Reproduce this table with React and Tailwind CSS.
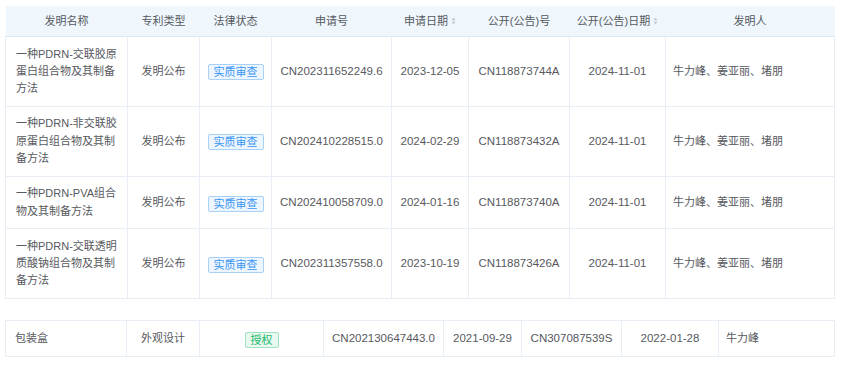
import React from "react";

const rows = [
  { name: "一种PDRN-交联胶原蛋白组合物及其制备方法", type: "发明公布", status: "实质审查", appNo: "CN202311652249.6", appDate: "2023-12-05", pubNo: "CN118873744A", pubDate: "2024-11-01", inventors: "牛力峰、姜亚丽、堵朋" },
  { name: "一种PDRN-非交联胶原蛋白组合物及其制备方法", type: "发明公布", status: "实质审查", appNo: "CN202410228515.0", appDate: "2024-02-29", pubNo: "CN118873432A", pubDate: "2024-11-01", inventors: "牛力峰、姜亚丽、堵朋" },
  { name: "一种PDRN-PVA组合物及其制备方法", type: "发明公布", status: "实质审查", appNo: "CN202410058709.0", appDate: "2024-01-16", pubNo: "CN118873740A", pubDate: "2024-11-01", inventors: "牛力峰、姜亚丽、堵朋" },
  { name: "一种PDRN-交联透明质酸钠组合物及其制备方法", type: "发明公布", status: "实质审查", appNo: "CN202311357558.0", appDate: "2023-10-19", pubNo: "CN118873426A", pubDate: "2024-11-01", inventors: "牛力峰、姜亚丽、堵朋" },
];

const FONT = { fontFamily: '"Liberation Sans", "Noto Sans CJK SC", sans-serif' };

function SortIcon() {
  return (
    <svg width="5" height="8" viewBox="0 0 5 8" className="inline-block">
      <path d="M0.5 3.2 L2.5 0.8 L4.5 3.2 Z" fill="#c0c4cc" />
      <path d="M0.5 4.8 L2.5 7.2 L4.5 4.8 Z" fill="#c0c4cc" />
    </svg>
  );
}

function Th({ children, sort }) {
  return (
    <th className="bg-[#eff6fc] border-b border-[#dbe7f2] py-[6px] px-[4px] text-[11px] leading-[18px] font-normal text-[#55595f] text-center whitespace-nowrap">
      <span className="inline-flex items-center gap-[3px]">
        {children}
        {sort ? <SortIcon /> : null}
      </span>
    </th>
  );
}

function BlueTag({ children }) {
  return (
    <span className="inline-block px-[5px] text-[11px] leading-[14px] border border-[#a8d1f8] bg-[#edf6ff] text-[#3a95f2] rounded-[2px]">
      {children}
    </span>
  );
}

function GreenTag({ children }) {
  return (
    <span className="inline-block px-[5px] text-[11px] leading-[14px] border border-[#9fe0c0] bg-[#e8f9f0] text-[#1db76a] rounded-[2px]">
      {children}
    </span>
  );
}

const td = "border border-[#e8eef5] py-[8.5px] leading-[17.3px] text-[#57595e] align-middle";

export default function App() {
  return (
    <div className="w-[846px] h-[366px] bg-white pt-[6px] pl-[5px]" style={FONT}>
      <table className="table-fixed border-collapse w-[829px]">
        <colgroup>
          <col className="w-[122px]" />
          <col className="w-[72px]" />
          <col className="w-[72px]" />
          <col className="w-[120px]" />
          <col className="w-[77px]" />
          <col className="w-[101px]" />
          <col className="w-[96px]" />
          <col className="w-[169px]" />
        </colgroup>
        <thead>
          <tr>
            <Th>发明名称</Th>
            <Th>专利类型</Th>
            <Th>法律状态</Th>
            <Th>申请号</Th>
            <Th sort>申请日期</Th>
            <Th>公开(公告)号</Th>
            <Th sort>公开(公告)日期</Th>
            <Th>发明人</Th>
          </tr>
        </thead>
        <tbody>
          {rows.map((r) => (
            <tr key={r.appNo}>
              <td className={`${td} text-[11px] text-left pl-[10px] pr-[8px]`}>{r.name}</td>
              <td className={`${td} text-[11px] text-center`}>{r.type}</td>
              <td className={`${td} text-center`}>
                <BlueTag>{r.status}</BlueTag>
              </td>
              <td className={`${td} text-[11.5px] text-center whitespace-nowrap`}>{r.appNo}</td>
              <td className={`${td} text-[11.5px] text-center whitespace-nowrap`}>{r.appDate}</td>
              <td className={`${td} text-[11.5px] text-center whitespace-nowrap`}>{r.pubNo}</td>
              <td className={`${td} text-[11.5px] text-center whitespace-nowrap`}>{r.pubDate}</td>
              <td className={`${td} text-[11px] text-left pl-[7px]`}>{r.inventors}</td>
            </tr>
          ))}
        </tbody>
      </table>

      <table className="table-fixed border-collapse w-[829px] mt-[21px]">
        <colgroup>
          <col className="w-[121px]" />
          <col className="w-[73px]" />
          <col className="w-[124px]" />
          <col className="w-[120px]" />
          <col className="w-[78px]" />
          <col className="w-[100px]" />
          <col className="w-[97px]" />
          <col className="w-[116px]" />
        </colgroup>
        <tbody>
          <tr>
            <td className={`${td} text-[11px] text-left pl-[9px]`}>包装盒</td>
            <td className={`${td} text-[11px] text-center`}>外观设计</td>
            <td className={`${td} text-center`}>
              <GreenTag>授权</GreenTag>
            </td>
            <td className={`${td} text-[11.5px] text-center whitespace-nowrap`}>CN202130647443.0</td>
            <td className={`${td} text-[11.5px] text-center whitespace-nowrap`}>2021-09-29</td>
            <td className={`${td} text-[11.5px] text-center whitespace-nowrap`}>CN307087539S</td>
            <td className={`${td} text-[11.5px] text-center whitespace-nowrap`}>2022-01-28</td>
            <td className={`${td} text-[11px] text-left pl-[7px]`}>牛力峰</td>
          </tr>
        </tbody>
      </table>
    </div>
  );
}
